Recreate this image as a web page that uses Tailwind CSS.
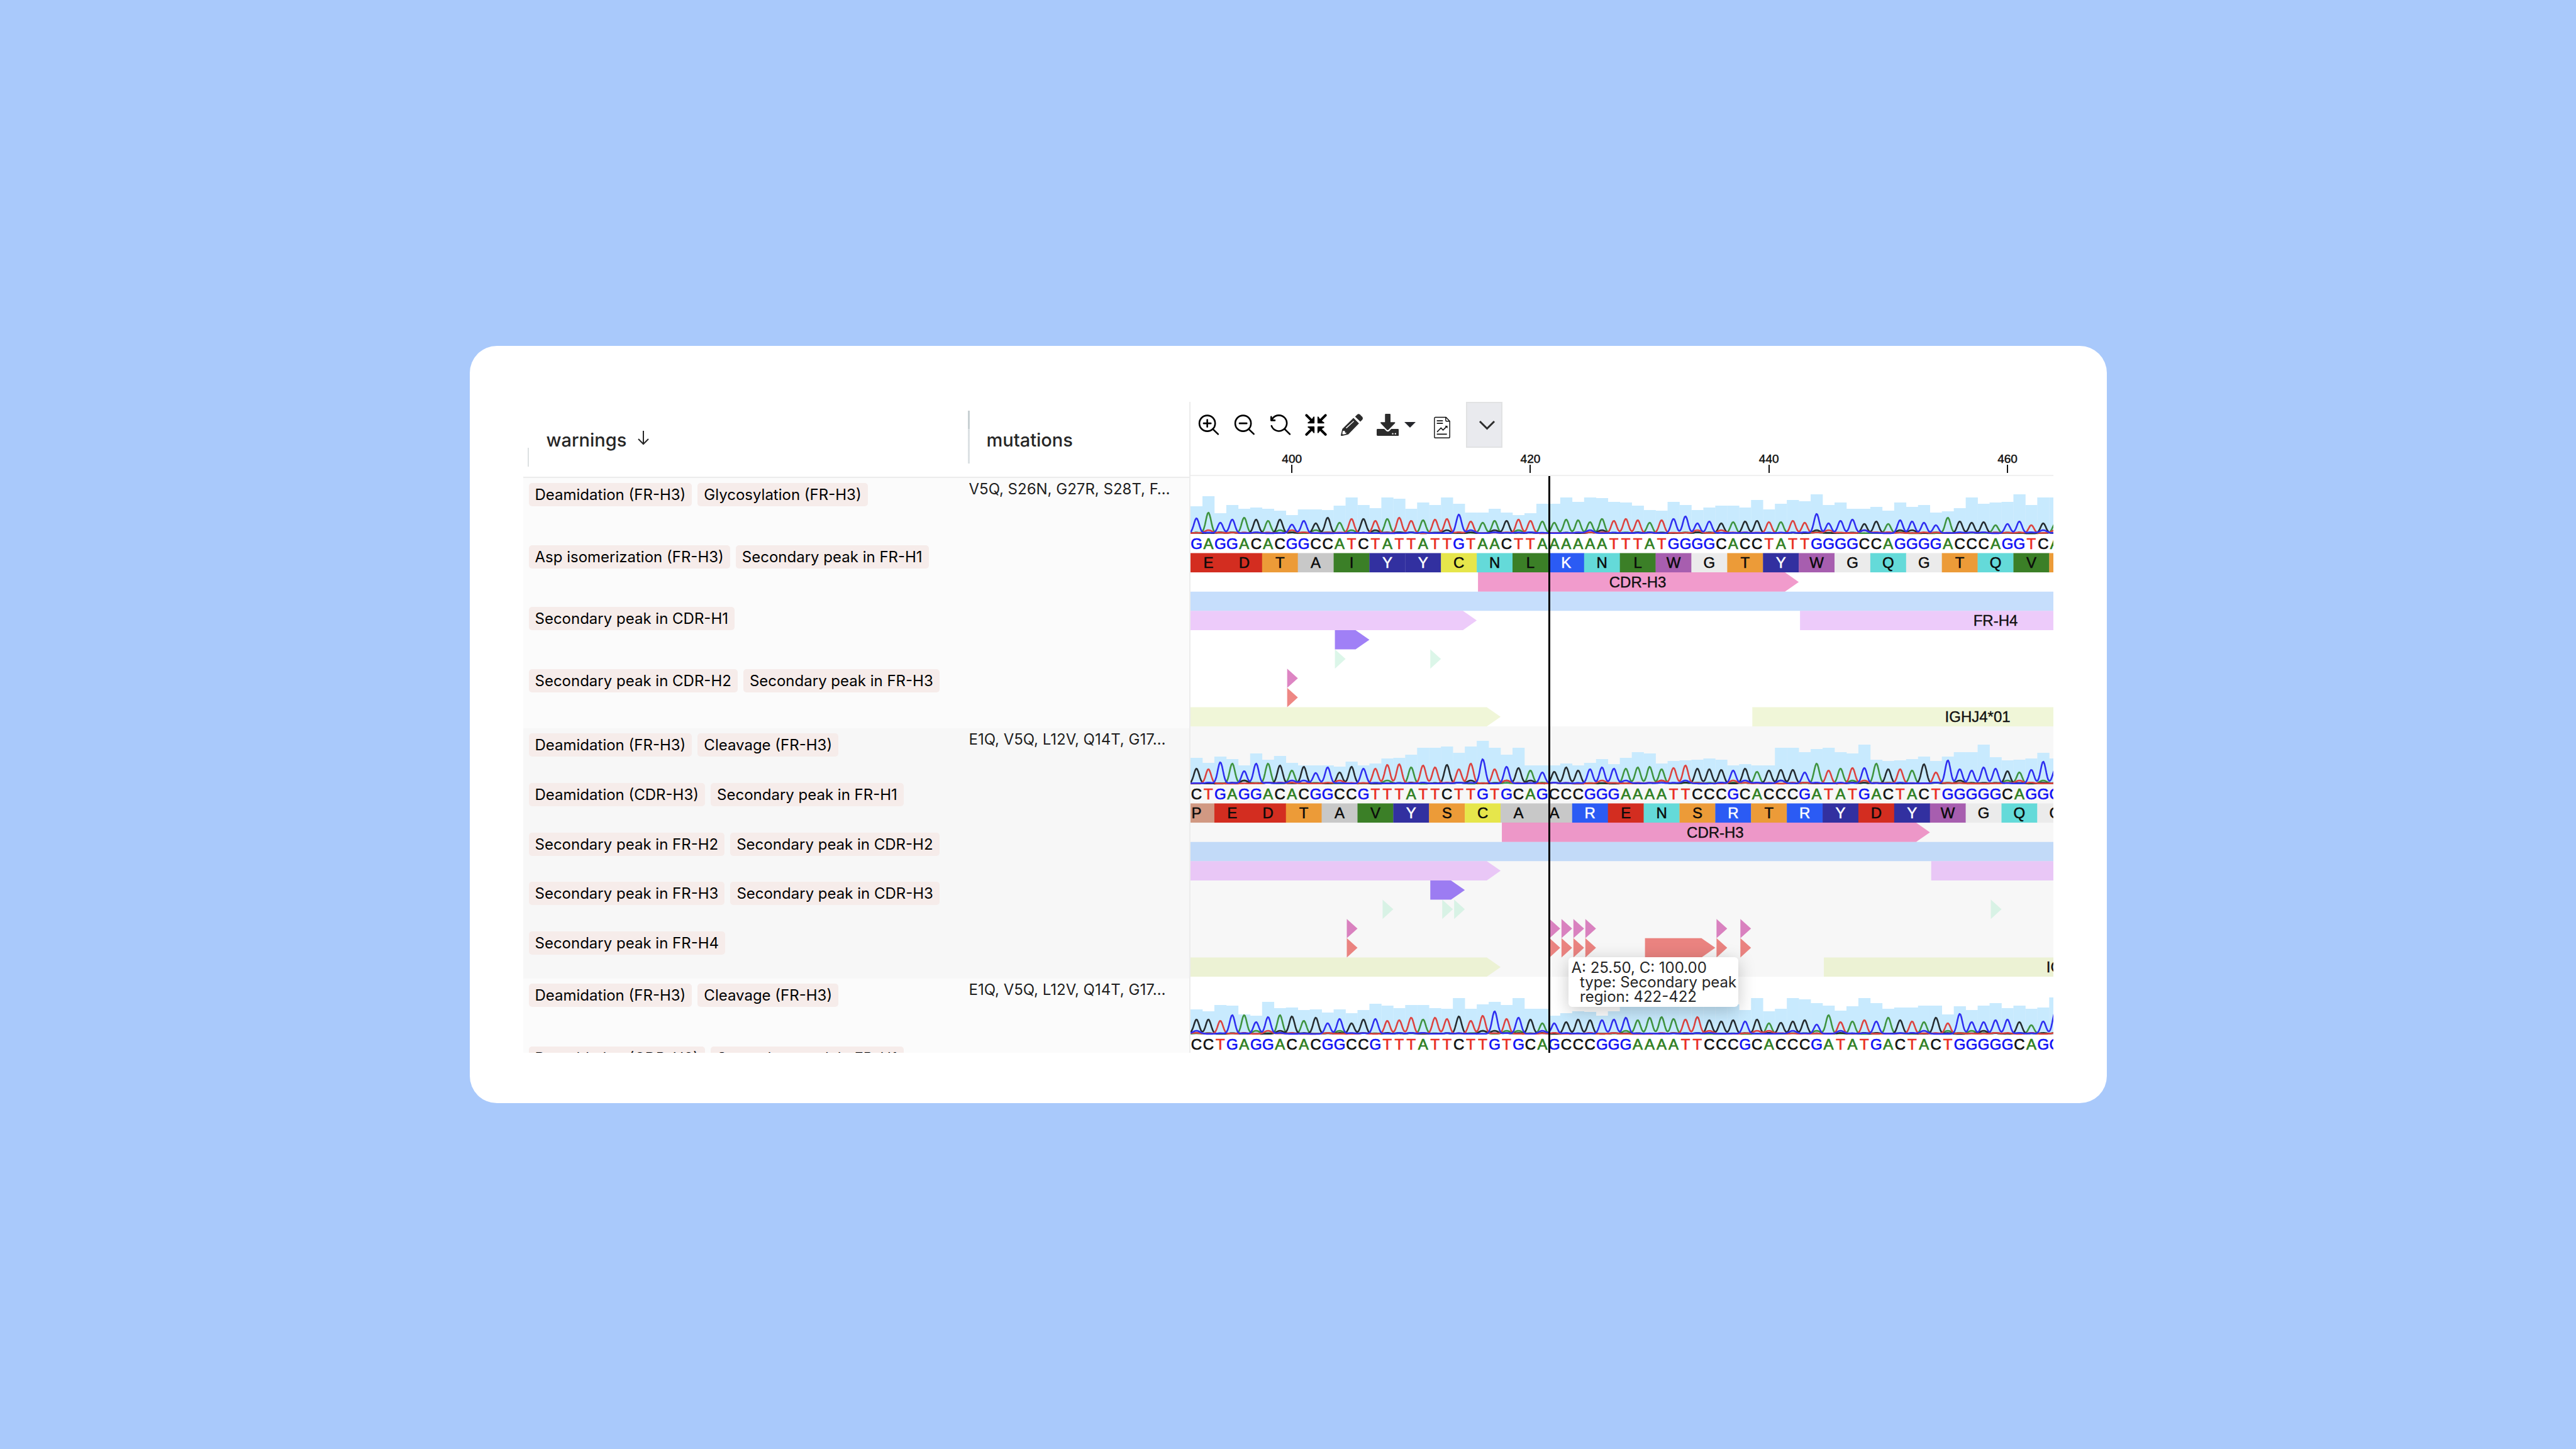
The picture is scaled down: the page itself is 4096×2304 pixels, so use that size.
<!DOCTYPE html>
<html lang="en">
<head>
  <meta charset="UTF-8" />
  <meta name="viewport" content="width=device-width, initial-scale=1.0" />
  <title>Antibody sequences</title>
  <script src="https://cdn.jsdelivr.net/npm/@tailwindcss/browser@4"></script>
</head>
<body class="min-h-screen flex justify-center items-center bg-[#a9c9fb] font-['Inter',sans-serif] text-[#1f1f1f]">
  <main class="w-[63.55%] bg-white rounded-[43px] pt-[89px] px-[85px] pb-20">
    <div class="flex h-[1035px] overflow-hidden">

      <!-- Warnings / mutations table -->
      <div class="w-[1059px] shrink-0 overflow-hidden">
        <table class="w-full table-fixed border-separate border-spacing-0">
          <thead>
            <tr class="h-[121px]">
              <th class="w-[707px] p-0 border-b-2 border-[#ececec]">
                <div class="flex items-center h-[119px] pl-[7px]">
                  <span class="w-[2px] h-[30px] bg-[#dde1e2] self-end mb-4"></span>
                  <button class="flex items-center gap-[18px] ml-7 pt-[2px] text-[29px] font-medium text-[#262626]">
                    warnings
                    <svg class="w-[18px] h-[34px]" viewBox="0 0 18 34" fill="none" stroke="#262626" stroke-width="2"><path d="M9 2v21M1 15l8 8 8-8" /></svg>
                  </button>
                </div>
              </th>
              <th class="p-0 border-b-2 border-[#ececec]">
                <div class="flex items-center h-[119px]">
                  <span class="w-[3px] h-[84px] mb-2 bg-linear-to-b from-[#c8d0d3] from-35% to-[#dce1e4] to-35%"></span>
                  <span class="ml-[27px] pt-[2px] text-[29px] font-medium text-[#262626]">mutations</span>
                </div>
              </th>
            </tr>
          </thead>
          <tbody id="warningRows"></tbody>
        </table>
      </div>

      <!-- Sequence viewer -->
      <section class="grow min-w-0 border-l-2 border-[#ececec] flex flex-col">
        <div class="flex items-center h-[73px] pl-[11px] gap-[22px] shrink-0">
          <button aria-label="Zoom in">
            <svg class="w-[35px] h-[35px]" viewBox="24 138 148 148" fill="none" stroke="#000" stroke-width="11" stroke-linecap="round"><circle cx="90" cy="202" r="53" /><path d="M66 202h48M90 178v48M130 243l33 32" /></svg>
          </button>
          <button aria-label="Zoom out">
            <svg class="w-[35px] h-[35px]" viewBox="266 138 148 148" fill="none" stroke="#000" stroke-width="11" stroke-linecap="round"><circle cx="332" cy="202" r="53" /><path d="M308 202h48M372 243l32 31" /></svg>
          </button>
          <button aria-label="Reset zoom">
            <svg class="w-[35px] h-[35px]" viewBox="502 138 148 148" fill="none" stroke="#000" stroke-width="11" stroke-linecap="round" stroke-linejoin="round"><path d="M518 219A53 53 0 1 0 527 167M609 243l32 32M516 158v24h24M516 182l12-16" /></svg>
          </button>
          <button aria-label="Fit to window">
            <svg class="w-[35px] h-[35px]" viewBox="740 138 148 148" fill="#000" stroke="#000" stroke-linejoin="round" stroke-linecap="round">
              <path stroke-width="17" d="M750 148l34 34M878 148l-34 34M750 277l34-34M878 277l-34-34" />
              <path stroke-width="8" d="M800 160v38h-38l14-9 15-15zM828 160v38h38l-14-9-15-15zM800 264v-37h-38l14 9 15 15zM828 264v-37h38l-14 9-15 15z" />
            </svg>
          </button>
          <button aria-label="Edit">
            <svg class="w-[35px] h-[35px]" viewBox="52 138 148 148" fill="#2c2c2c">
              <path d="M148 157l13-13q10-9 20-1l15 15q8 10 0 20l-13 13z" />
              <path fill-rule="evenodd" d="M137 166l37 37-72 73-44 11q-6 1-6-6l10-41zM64 257l-2 16 4 4 16-3 10-8-11-1-2-12-11-1zM86 231l4 5 50-46q2-4-3-4z" />
            </svg>
          </button>
          <button aria-label="Download" class="flex items-center gap-[9px]">
            <svg class="w-[35px] h-[35px]" viewBox="288 138 148 148" fill="#2c2c2c">
              <path d="M349 138h27q5 0 5 5v51h27q8 1 3 7l-43 44q-6 5-12 0l-41-44q-5-6 3-7h26v-51q0-5 5-5z" />
              <path fill-rule="evenodd" d="M294 240h45l15 14q9 6 18 0l14-14h45q6 0 6 6v34q0 6-6 6H294q-6 0-6-6v-34q0-6 6-6zM396 267a5 5 0 1 0 .1 0zM414 267a5 5 0 1 0 .1 0z" />
            </svg>
            <svg class="w-[18px] h-[9px]" viewBox="0 0 18 9"><path d="M0 0h18L9 9z" fill="#24262b" /></svg>
          </button>
          <button aria-label="Report" class="ml-[7px]">
            <svg class="w-[26px] h-[43px]" viewBox="681 121 109 182" fill="none" stroke="#111" stroke-width="6">
              <path stroke-linejoin="round" d="M690 161h72l25 27v104q0 8-8 8h-88q-7 0-7-8V169q0-8 6-8zM760 163v17q0 8 8 8h18" />
              <path stroke-width="8" d="M700 185h41M700 202h41M700 275h68" />
              <path d="M702 260l26-27 14 14 24-24" stroke-width="7" /><path d="M754 218h18v18z" fill="#111" stroke="none" />
            </svg>
          </button>
          <button aria-label="More options" class="flex items-center justify-center pl-[10px] w-[58px] h-[73px] ml-[3px] bg-[#e9eaee] border-2 border-[#e1e2e3]">
            <svg class="w-[27px] h-4" viewBox="0 0 27 16" fill="none" stroke="#2c2c2c" stroke-width="3"><path d="M2 2l11.500 11.500L25 2" /></svg>
          </button>
        </div>
        <svg id="axis" class="block w-full h-[45px] shrink-0 border-b-2 border-[#f0f0f0] font-['Liberation_Sans',Arial,sans-serif] text-[19px]"></svg>
        <div id="tracks" class="relative grow min-h-0">
          <div id="rows" class="h-full overflow-hidden font-['Liberation_Sans',Arial,sans-serif] text-[24px]"></div>
          <div id="cursor" class="absolute top-0 h-full w-[3px] bg-black"></div>
          <div role="tooltip" class="absolute left-[601px] top-[765px] w-[270px] py-[5px] pl-[5px] bg-white rounded-md text-[24px] leading-[23px] whitespace-pre text-[#262626] shadow-[0_6px_28px_rgba(0,0,0,0.22)]">A: 25.50, C: 100.00
  type: Secondary peak
  region: 422-422</div>
        </div>
      </section>
    </div>
  </main>

  <script>
    const warnings = [
      {
        shade: "bg-[#fbfbfb]",
        mutations: "V5Q, S26N, G27R, S28T, F...",
        lines: [
          ["Deamidation (FR-H3)", "Glycosylation (FR-H3)"],
          ["Asp isomerization (FR-H3)", "Secondary peak in FR-H1"],
          ["Secondary peak in CDR-H1"],
          ["Secondary peak in CDR-H2", "Secondary peak in FR-H3"]
        ]
      },
      {
        shade: "bg-[#f7f7f7]",
        mutations: "E1Q, V5Q, L12V, Q14T, G17...",
        lines: [
          ["Deamidation (FR-H3)", "Cleavage (FR-H3)"],
          ["Deamidation (CDR-H3)", "Secondary peak in FR-H1"],
          ["Secondary peak in FR-H2", "Secondary peak in CDR-H2"],
          ["Secondary peak in FR-H3", "Secondary peak in CDR-H3"],
          ["Secondary peak in FR-H4"]
        ]
      },
      {
        shade: "bg-[#fbfbfb]",
        mutations: "E1Q, V5Q, L12V, Q14T, G17...",
        lines: [
          ["Deamidation (FR-H3)", "Cleavage (FR-H3)"],
          ["Deamidation (CDR-H3)", "Secondary peak in FR-H1"]
        ]
      }
    ];

    document.getElementById("warningRows").innerHTML = warnings.map((row, i) => `
      <tr class="${row.shade}">
        <td class="p-0 align-top">
          <div class="flex flex-col ${i === 2 ? "h-[204px]" : "h-[398px]"} pb-1 pl-[9px]">
            ${row.lines.map(line => `
              <div class="flex grow basis-0 items-start gap-[9px] pt-2">
                ${line.map(text => `<span class="h-[37px] px-[10px] rounded-[5px] bg-[#f6ecea] text-[24px] leading-[38px] text-black whitespace-nowrap">${text}</span>`).join("")}
              </div>`).join("")}
          </div>
        </td>
        <td class="pt-1 pl-[2px] pr-0 pb-0 align-top text-[24px] leading-[28px] whitespace-nowrap">${row.mutations.replace("...", "…")}</td>
      </tr>`).join("");

    // Visible window of the alignment, in bases
    const FIRST_BASE = 392;
    const VISIBLE = 72.35;
    const ROW = 398;
    const LANE = ROW / 13;

    const baseColors = { A: "#2f8022", C: "#111111", G: "#1010f5", T: "#e92d22" };
    const traceColors = { A: "#3f9440", C: "#262c30", T: "#dc4340", G: "#2f2ff0" };
    const aminoColors = {
      E: "#d32d20", D: "#d32d20", T: "#ec9b38", S: "#ec9b38", A: "#c8c8c8", I: "#3b7f27", L: "#3b7f27", V: "#3b7f27",
      Y: "#3230a0", C: "#e6e64b", N: "#64dad9", Q: "#64dad9", K: "#2b5bf4", R: "#2b5bf4", W: "#a75eaf", G: "#ebebeb", P: "#d19983"
    };
    // Feature fills are drawn at half opacity
    const colors = {
      cdr: "#e33799", chain: "#8dbdf9", fr: "#db97f5", site: "#4101ed", mint: "#b9edd3",
      low: "#bb0b87", peak: "#dd0f09", gene: "#e1edb1"
    };

    // Features are [lane, start, end, color, label]
    const reads = [
      {
        bg: "#ffffff",
        seq: "GAGGACACGGCCATCTATTATTGTAACTTAAAAAATTTATGGGGCACCTATTGGGGCCAGGGGACCCAGGTCA",
        aminos: "EDTAIYYCNLKNLWGTYWGQGTQVT",
        frame: 0,
        quality: [44,60,33,46,40,42,40,37,30,39,39,38,45,58,46,41,58,56,40,50,46,58,48,34,34,40,34,30,33,48,48,58,51,58,57,51,50,45,38,37,51,46,38,42,45,45,42,54,39,48,54,52,63,46,50,40,40,43,37,50,43,46,34,36,41,58,48,50,51,63,46,58,58],
        peaks: [24,33,17,22,25,22,20,22,14,20,16,25,17,23,23,20,23,25,20,21,22,23,30,19,17,20,20,22,20,19,17,22,21,18,23,20,23,21,17,21,23,27,16,19,16,18,19,20,18,18,20,17,31,16,20,22,15,19,15,21,19,17,13,25,19,17,18,13,15,19,13,16,15],
        features: [
          [5, 24, 51, "cdr", "CDR-H3"], [6, -9, 90, "chain"], [7, -9, 24, "fr"], [7, 51, 84, "fr", "FR-H4"],
          [8, 12, 15, "site"], [9, 12, 13, "mint"], [9, 20, 21, "mint"], [10, 8, 9, "low"], [11, 8, 9, "peak"],
          [12, -9, 26, "gene"], [12, 47, 85, "gene", "IGHJ4*01"]
        ]
      },
      {
        bg: "#f7f7f7",
        seq: "CTGAGGACACGGCCGTTTATTCTTGTGCAGCCCGGGAAAATTCCCGCACCCGATATGACTACTGGGGGCAGGG",
        aminos: "PEDTAVYSCAARENSRTRYDYWGQG",
        frame: -1,
        quality: [42,34,44,40,30,49,39,45,34,30,30,30,28,36,30,33,41,42,47,58,58,60,50,60,69,58,47,58,30,30,30,33,30,34,40,32,42,51,49,33,37,38,39,41,39,30,32,30,30,58,58,51,56,58,51,49,63,39,37,38,40,44,37,44,51,51,63,43,38,39,41,50,41],
        peaks: [24,23,34,32,20,32,32,29,21,27,17,26,18,27,24,24,30,31,26,29,26,30,23,32,39,23,27,25,21,18,19,26,21,23,26,24,24,26,27,23,25,29,24,23,22,21,24,19,21,22,22,18,32,21,24,25,25,32,23,23,21,31,18,37,23,21,26,24,20,18,22,35,22],
        features: [
          [5, 26, 62, "cdr", "CDR-H3"], [6, -9, 90, "chain"], [7, -9, 26, "fr"], [7, 62, 95, "fr"],
          [8, 20, 23, "site"], [9, 16, 17, "mint"], [9, 21, 22, "mint"], [9, 22, 23, "mint"], [9, 67, 68, "mint"],
          ...[13, 30, 31, 32, 33, 44, 46].flatMap(k => [[10, k, k + 1, "low"], [11, k, k + 1, "peak"]]),
          [11, 38, 44, "peak"], [12, -9, 26, "gene"], [12, 53, 96, "gene", "IGHJ4*01"]
        ]
      },
      {
        bg: "#ffffff",
        seq: "CCTGAGGACACGGCCGTTTATTCTTGTGCAGCCCGGGAAAATTCCCGCACCCGATATGACTACTGGGGGCAGG",
        aminos: "",
        frame: 0,
        quality: [40,37,47,46,32,30,52,42,43,39,40,35,40,34,39,49,46,42,47,47,42,41,58,41,48,52,47,58,41,41,30,34,37,36,30,37,45,45,45,45,45,45,45,45,45,48,39,58,37,41,58,56,50,46,38,45,58,50,41,43,43,46,46,32,45,39,46,50,42,46,41,43,59],
        peaks: [23,23,21,30,30,19,27,30,28,21,26,17,24,17,23,24,21,22,26,23,26,24,28,21,29,36,24,26,23,17,17,19,23,22,22,23,26,22,26,27,24,23,27,22,20,22,20,23,17,18,20,22,15,30,19,20,22,20,26,22,20,19,26,17,32,19,19,22,23,19,14,20,34],
        features: []
      }
    ];

    // Small repeatable background signal for each channel
    function noise(channel, k, read) {
      const v = Math.sin((k + 3) * 12.9898 + channel * 78.233 + read * 37.7) * 43758.5453;
      const f = v - Math.floor(v);
      return f > 0.9 ? 5 : f * 2;
    }

    function tracePath(read, index, base, channel, cell) {
      const baseline = 91;
      let d = "";
      for (let x = 0; x <= read.seq.length; x += 0.08) {
        let y = 0;
        const near = Math.floor(x);
        for (let k = near - 2; k <= near + 2; k++) {
          const dist = x - k - 0.5;
          const h = read.seq[k] === base ? read.peaks[k] : noise(channel, k, index);
          const s = read.seq[k] === base ? 0.31 : 0.42;
          y += h * Math.exp(-(dist * dist) / (s * s));
        }
        d += (d ? "L" : "M") + (x * cell).toFixed(1) + " " + (baseline - y).toFixed(1);
      }
      return `<path d="${d}" fill="none" stroke="${traceColors[base]}" stroke-width="2.6" stroke-linejoin="round" />`;
    }

    function featureShape([lane, start, end, color, label], cell) {
      const x1 = start * cell + 2;
      const x2 = end * cell;
      const y1 = lane * LANE;
      const y2 = y1 + LANE;
      const head = Math.min(22, x2 - x1);
      const text = label ? `<text x="${(start + end) / 2 * cell}" y="${y1 + 23.5}" text-anchor="middle" fill="#111" stroke="#111" stroke-width="0.4">${label}</text>` : "";
      return `<path d="M${x1} ${y1}H${x2 - head}L${x2} ${(y1 + y2) / 2}L${x2 - head} ${y2}H${x1}z" fill="${colors[color]}" fill-opacity="0.5" />${text}`;
    }

    function drawRead(read, index, cell) {
      const bars = read.quality.map((q, k) =>
        `<rect x="${k * cell}" y="${92 - q}" width="${cell + 0.3}" height="${q}" fill="#c8eafe" />`).join("");
      const traces = ["A", "C", "T", "G"].map((b, i) => tracePath(read, index, b, i, cell)).join("");
      const letters = [...read.seq].map((b, k) =>
        `<text x="${(k + 0.5) * cell}" y="116" text-anchor="middle" fill="${baseColors[b]}" stroke="${baseColors[b]}" stroke-width="0.7">${b}</text>`).join("");
      const aminos = [...read.aminos].map((a, i) => {
        const k = i * 3 + read.frame;
        // A codon that starts past the last visible base shows no letter
        const letter = k + 1 < VISIBLE ? a : "";
        const ink = "YKR".includes(a) ? "#ffffff" : "#0a0a0a";
        return `<rect x="${k * cell}" y="${4 * LANE}" width="${3 * cell + 0.3}" height="${LANE}" fill="${aminoColors[a]}" />
          ${letter && `<text x="${(k + 1.5) * cell}" y="${4 * LANE + 24}" text-anchor="middle" fill="${ink}" stroke="${ink}" stroke-width="0.5">${a}</text>`}`;
      }).join("");
      return `<svg class="block w-full h-[398px]" style="background:${read.bg}">
        ${bars}${traces}${letters}${aminos}
        ${read.features.map(f => featureShape(f, cell)).join("")}
      </svg>`;
    }

    const tracks = document.getElementById("tracks");

    function draw() {
      const cell = tracks.clientWidth / VISIBLE;
      document.getElementById("axis").innerHTML = [400, 420, 440, 460].map(pos => {
        const x = (pos - FIRST_BASE + 0.5) * cell;
        return `<text x="${x}" y="24" text-anchor="middle" fill="#111" stroke="#111" stroke-width="0.5">${pos}</text>
          <rect x="${Math.round(x - 1)}" y="27" width="2" height="13" fill="#111" />`;
      }).join("");
      document.getElementById("rows").innerHTML = reads.map((r, i) => drawRead(r, i, cell)).join("");
      document.getElementById("cursor").style.left = Math.round(30 * cell) + "px";
    }

    new ResizeObserver(draw).observe(tracks);
  </script>
</body>
</html>
